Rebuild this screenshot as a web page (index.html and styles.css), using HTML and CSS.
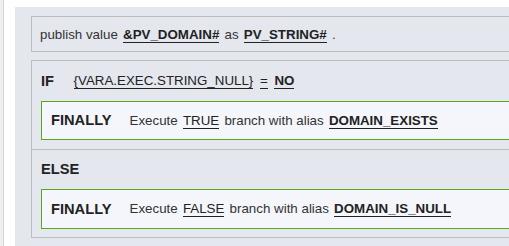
FILE: index.html
```html
<!DOCTYPE html>
<html lang="en">
<head>
  <meta charset="UTF-8" />
  <meta name="viewport" content="width=device-width, initial-scale=1.0"/>
  <title>Publish / If-Else</title>
  <link rel="stylesheet" href="styles.css">
</head>
<body>
  <div class="page">
    <div class="gutter"></div>

    <div class="panel">
      <div class="stmt publish">
        publish value <span class="val strong">&amp;PV_DOMAIN#</span> as <span class="val strong">PV_STRING#</span> .
      </div>

      <!-- IF / ELSE -->
      <div class="stmt cond">
        <div class="branch">
          <div class="branch-head">
            <span class="kw">IF</span>
            <div class="expr"><span class="val">{VARA.EXEC.STRING_NULL}</span> <span class="val">=</span> <span class="val strong">NO</span></div>
          </div>
          <div class="finally">
            <span class="kw">FINALLY</span>
            <div class="expr">Execute <span class="val">TRUE</span> branch with alias <span class="val strong">DOMAIN_EXISTS</span></div>
          </div>
        </div>

        <div class="branch else">
          <div class="branch-head">
            <span class="kw">ELSE</span>
          </div>
          <div class="finally">
            <span class="kw">FINALLY</span>
            <div class="expr">Execute <span class="val">FALSE</span> branch with alias <span class="val strong">DOMAIN_IS_NULL</span></div>
          </div>
        </div>
      </div>
    </div>
  </div>
</body>
</html>
```

FILE: styles.css
```css
body {
  margin: 0;
  font-family: 'Liberation Sans', Arial, sans-serif;
  font-size: 13.33px;
  color: #333;
  background: #fff;
  overflow: hidden;
}
.page {
  display: flex;
  height: 246px;
}
.gutter {
  width: 3px;
  background: #efefef;
  border-right: 1px solid #d6d6d6;
  flex-shrink: 0;
}
/* the panel is cut off by the frame on the right and at the bottom */
.panel {
  flex: 1;
  margin: 7px 0 0 11px;
  padding: 9px 0 0 16px;
  background: #e4e7ee;
}
.stmt {
  border: 1px solid #bdbdbd;
  border-right: none;
  background: #e4e7ee;
}
.publish {
  padding: 9.5px 8px 8.5px;
  line-height: 16px;
  margin-bottom: 8px;
}
.val {
  color: #222;
  border-bottom: 1px solid #222;
  margin: 0 1.5px;
}
.val.strong {
  font-weight: bold;
}
.branch {
  padding: 0 0 8.5px 9px;
}
.branch.else {
  border-top: 1px solid #bdbdbd;
}
.branch-head {
  display: flex;
  align-items: center;
  height: 39.5px;
}
.kw {
  font-size: 14.67px;
  font-weight: bold;
  color: #222;
  margin-right: 18px;
}
.finally {
  display: flex;
  align-items: center;
  height: 37.5px;
  padding: 0 9px;
  border: 1px solid #5aa61c;
  border-right: none;
  background: #f4f6fb;
}
```
